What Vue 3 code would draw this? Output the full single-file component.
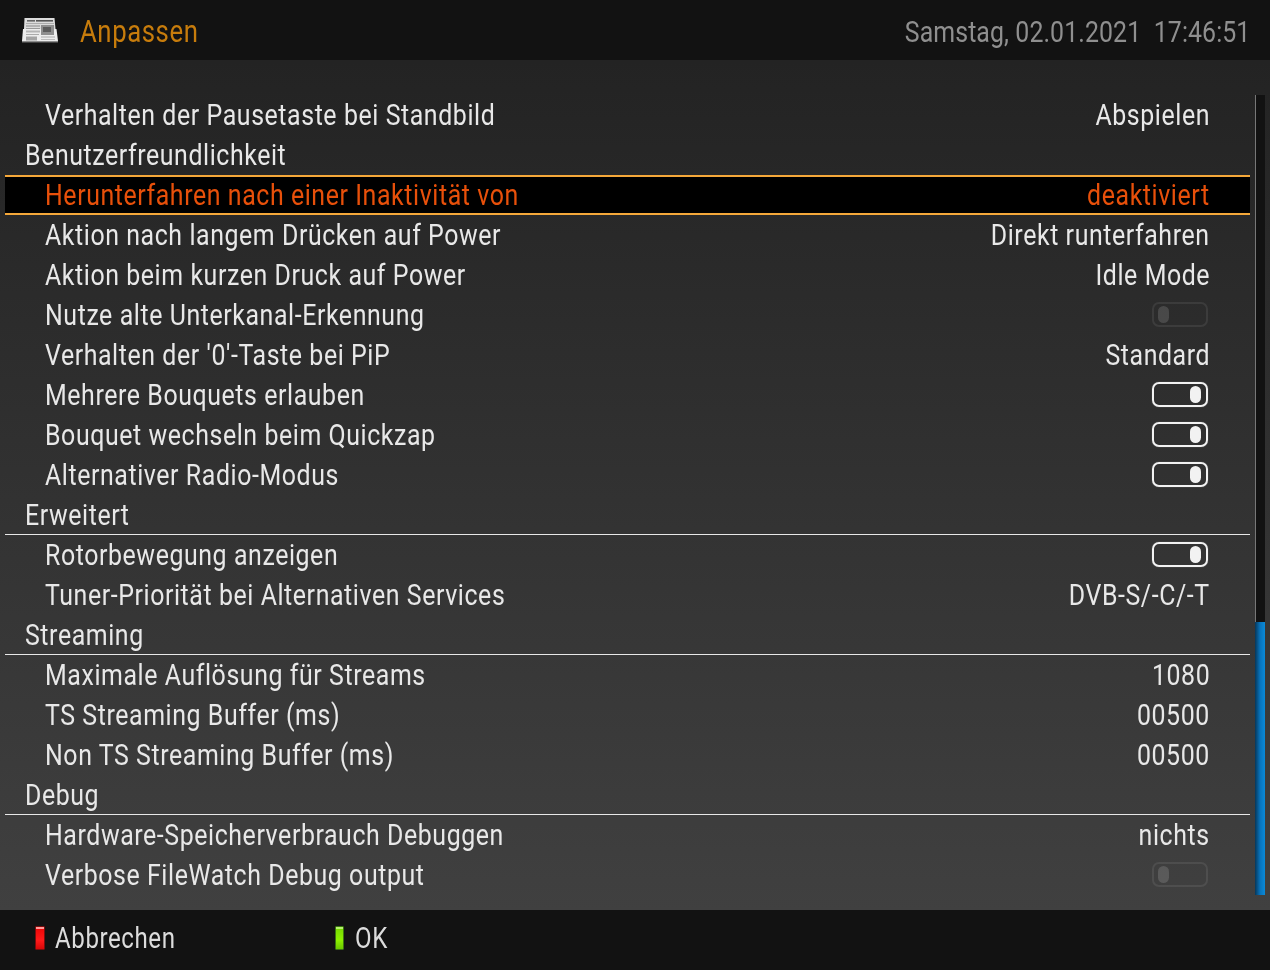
<script setup>
const rows = [
  { t: 'Verhalten der Pausetaste bei Standbild', v: 'Abspielen' },
  { t: 'Benutzerfreundlichkeit', h: true, hide: true },
  { t: 'Herunterfahren nach einer Inaktivität von', v: 'deaktiviert', sel: true },
  { t: 'Aktion nach langem Drücken auf Power', v: 'Direkt runterfahren' },
  { t: 'Aktion beim kurzen Druck auf Power', v: 'Idle Mode' },
  { t: 'Nutze alte Unterkanal-Erkennung', sw: 'off' },
  { t: "Verhalten der '0'-Taste bei PiP", v: 'Standard' },
  { t: 'Mehrere Bouquets erlauben', sw: 'on' },
  { t: 'Bouquet wechseln beim Quickzap', sw: 'on' },
  { t: 'Alternativer Radio-Modus', sw: 'on' },
  { t: 'Erweitert', h: true },
  { t: 'Rotorbewegung anzeigen', sw: 'on' },
  { t: 'Tuner-Priorität bei Alternativen Services', v: 'DVB-S/-C/-T' },
  { t: 'Streaming', h: true },
  { t: 'Maximale Auflösung für Streams', v: '1080' },
  { t: 'TS Streaming Buffer (ms)', v: '00500' },
  { t: 'Non TS Streaming Buffer (ms)', v: '00500' },
  { t: 'Debug', h: true },
  { t: 'Hardware-Speicherverbrauch Debuggen', v: 'nichts' },
  { t: 'Verbose FileWatch Debug output', sw: 'off' },
]
</script>

<template>
  <div class="screen">
    <header class="top">
      <svg class="paper" width="38" height="26" viewBox="0 0 38 26">
        <defs>
          <filter id="soft"><feGaussianBlur stdDeviation="0.35" /></filter>
        </defs>
        <g filter="url(#soft)">
          <path d="M3.5 1 H33.5 L34.5 12 H3 Z" fill="#dcdcdc" />
          <path d="M2 12 H35.5 L37 24 H1 Z" fill="#ececec" />
          <rect x="6" y="3" width="8" height="1.6" fill="#666" />
          <rect x="15" y="3" width="17" height="1.6" fill="#555" />
          <rect x="5" y="6" width="28" height="0.7" fill="#999" />
          <rect x="5" y="8.5" width="14" height="1" fill="#888" />
          <rect x="5" y="11" width="14" height="1" fill="#999" />
          <rect x="5" y="13.5" width="14" height="2" fill="#b4b4b4" />
          <rect x="5" y="17" width="13" height="1" fill="#aaa" />
          <rect x="20" y="8" width="13" height="10" fill="#8e8e8e" />
          <rect x="22" y="10" width="8" height="5" fill="#5c5c5c" />
          <rect x="5" y="19.5" width="11" height="4" fill="#a4a4a4" />
          <rect x="20" y="19.5" width="14" height="1" fill="#aaa" />
          <rect x="20" y="22" width="14" height="1" fill="#bbb" />
          <rect x="1" y="24" width="36" height="1.4" fill="#8c8c8c" />
        </g>
      </svg>
      <span class="title"><span class="sq">Anpassen</span></span>
      <span class="clock"><span class="sq sq-r">Samstag, 02.01.2021&nbsp;&nbsp;17:46:51</span></span>
    </header>

    <main class="body">
      <div class="list">
        <div
          v-for="r in rows"
          :key="r.t"
          class="row"
          :class="{ head: r.h, sel: r.sel, hideline: r.hide }"
        >
          <span class="label"><span class="sq">{{ r.t }}</span></span>
          <span v-if="r.v" class="val"><span class="sq sq-r">{{ r.v }}</span></span>
          <span v-if="r.sw" class="switch" :class="r.sw"><i></i></span>
        </div>
      </div>
      <div class="bar"><div class="thumb"></div></div>
    </main>

    <footer class="bottom">
      <div class="btn"><b class="key red"></b><span class="sq">Abbrechen</span></div>
      <div class="btn"><b class="key green"></b><span class="sq">OK</span></div>
    </footer>
  </div>
</template>

<style>
html, body { margin: 0; background: #121212; }
</style>

<style scoped>
.screen {
  width: 1270px;
  height: 970px;
  display: flex;
  flex-direction: column;
  overflow: hidden;
  font-family: Roboto, "Liberation Sans", sans-serif;
  color: #e8e8e8;
  background: #121212;
}
.sq {
  display: inline-block;
  transform: scaleX(0.83);
  transform-origin: left center;
  white-space: nowrap;
  letter-spacing: 0.7px;
}
.sq-r { transform-origin: right center; }
.top {
  height: 60px;
  flex: none;
  box-sizing: border-box;
  display: flex;
  align-items: center;
  padding: 0 20px 0 21px;
  background: #121212;
}
.paper { flex: none; margin-right: 21px; }
.title { font-size: 31px; color: #c77c0c; padding-top: 2px; }
.clock { margin-left: auto; font-size: 30px; color: #8f8f8f; padding-top: 3px; }
.clock .sq { letter-spacing: 0.1px; }
.body {
  height: 850px;
  flex: none;
  display: flex;
  box-sizing: border-box;
  padding: 35px 5px 15px 5px;
  background: linear-gradient(#232323, #404040);
}
.list { width: 1245px; flex: none; }
.row {
  height: 40px;
  box-sizing: border-box;
  display: flex;
  align-items: center;
  justify-content: space-between;
  padding: 0 40px 2px 40px;
  font-size: 30px;
  color: #e8e8e8;
}
.head {
  padding-left: 20px;
  padding-bottom: 1px;
  border-bottom: 1px solid #e8e8e8;
}
.hideline { border-bottom: 0; padding-bottom: 2px; }
.sel {
  padding-bottom: 2px;
  background: #000;
  border-top: 2px solid #f5a83a;
  border-bottom: 2px solid #f5a83a;
  color: #e8500a;
}
.val { display: block; }
.switch {
  width: 56px;
  height: 25px;
  box-sizing: border-box;
  margin: 1px 2px 0 0;
  border: 2px solid #f2f2f2;
  border-radius: 7px;
  display: flex;
  align-items: center;
  padding: 0 5px 0 4px;
  box-shadow: 0 0 1px rgba(255, 255, 255, 0.5);
}
.switch i {
  display: block;
  width: 11px;
  height: 17px;
  border-radius: 6px;
  background: #f2f2f2;
}
.switch.on { justify-content: flex-end; }
.switch.off { border-color: rgba(255,255,255,0.08); box-shadow: none; }
.switch.off i { background: rgba(255,255,255,0.14); }
.bar {
  width: 10px;
  height: 800px;
  flex: none;
  margin-left: 5px;
  box-sizing: border-box;
  border-left: 1px solid #777;
  background: #121212;
  display: flex;
  flex-direction: column;
  justify-content: flex-end;
}
.thumb {
  height: 273px;
  margin-left: -1px;
  background: linear-gradient(90deg, #06375a, #0873bb 50%, #0a8ad8);
}
.bottom {
  height: 60px;
  flex: none;
  box-sizing: border-box;
  display: flex;
  align-items: center;
  padding: 0 0 5px 35px;
  background: #121212;
  font-size: 29px;
  color: #dcdcdc;
}
.btn { width: 300px; display: flex; align-items: center; flex: none; }
.key {
  display: block;
  height: 24px;
  box-sizing: border-box;
  margin-right: 10px;
  border-radius: 1px;
}
.red {
  width: 10px;
  border: 1px solid #7c0c0c;
  background: linear-gradient(#ff9a9a 0 2px, #f00808 2px, #ff1a1a 60%, #d80808);
}
.green {
  width: 9px;
  margin-right: 11px;
  border: 1px solid #3a7510;
  background: linear-gradient(#b8f070 0 2px, #78dc00 2px, #8cf000 60%, #6cc800);
}
</style>
